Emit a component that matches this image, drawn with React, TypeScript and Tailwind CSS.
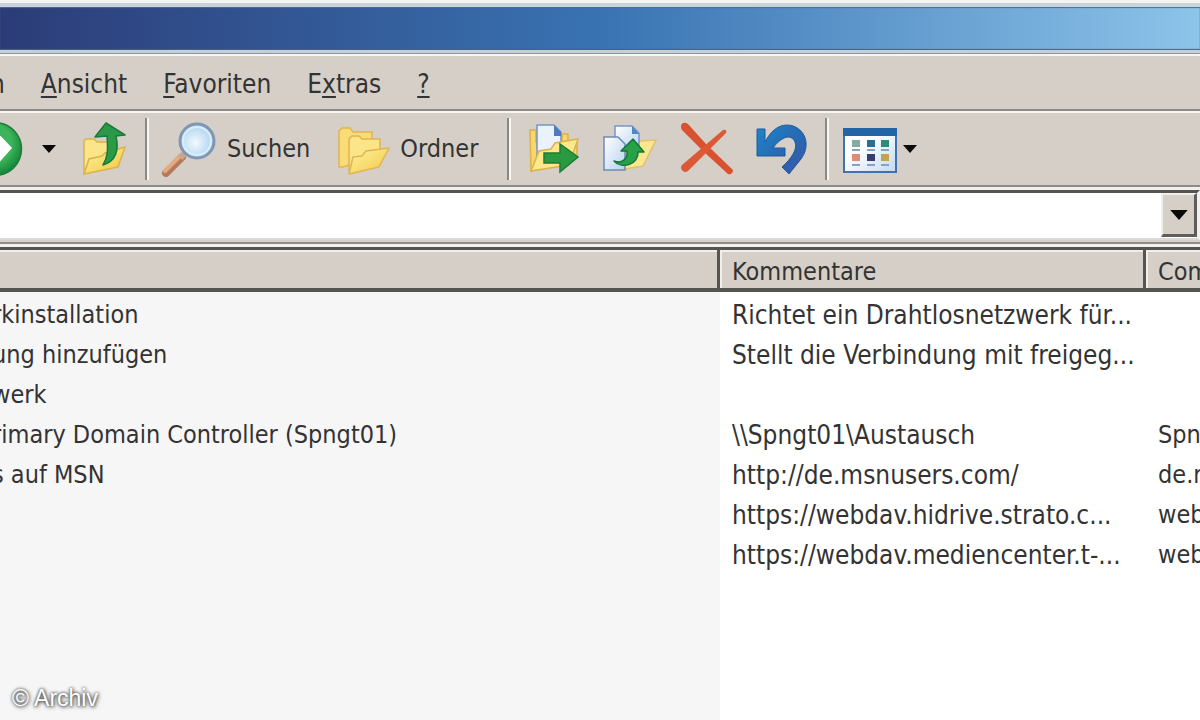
import type { ReactNode } from "react";

type Row = { name: string; comment: string; computer: string };

const rows: Row[] = [
  { name: "rkinstallation", comment: "Richtet ein Drahtlosnetzwerk für...", computer: "" },
  { name: "ung hinzufügen", comment: "Stellt die Verbindung mit freigeg...", computer: "" },
  { name: "werk", comment: "", computer: "" },
  { name: "rimary Domain Controller (Spngt01)", comment: "\\\\Spngt01\\Austausch", computer: "Spn" },
  { name: "s auf MSN", comment: "http://de.msnusers.com/", computer: "de.m" },
  { name: "", comment: "https://webdav.hidrive.strato.c...", computer: "web" },
  { name: "", comment: "https://webdav.mediencenter.t-...", computer: "web" },
];

function Caret({ className = "h-2 w-3.5" }: { className?: string }) {
  return (
    <svg viewBox="0 0 14 8" className={className}>
      <path d="M0 0h14L7 8z" fill="#0a0a0a" />
    </svg>
  );
}

function Separator() {
  return <div className="h-[62px] w-1 shrink-0 border-l-2 border-r-2 border-l-[#8b8783] border-r-[#f8f7f4]" />;
}

function ForwardIcon() {
  return (
    <svg viewBox="0 0 24 56" className="h-14 w-6">
      <defs>
        <radialGradient id="go" cx="0.45" cy="0.4" r="0.6">
          <stop offset="0.6" stopColor="#3cb55a" />
          <stop offset="1" stopColor="#15853a" />
        </radialGradient>
      </defs>
      <circle cx="-5" cy="28" r="26.5" fill="url(#go)" stroke="#1c7c3a" strokeWidth="1.5" />
      <path d="M-4 10 12 27-4 45z" fill="#fff" />
    </svg>
  );
}

function UpFolderIcon() {
  return (
    <svg viewBox="0 0 46 56" className="h-14 w-[46px]">
      <defs>
        <linearGradient id="upf" x1="0" y1="0" x2="1" y2="1">
          <stop offset="0" stopColor="#fff3a2" />
          <stop offset="1" stopColor="#f0c63e" />
        </linearGradient>
      </defs>
      <path d="M2 20l2-2h8l3 3h17v14L2 53z" fill="#fbe58a" stroke="#dcb24a" strokeWidth="1.5" />
      <path d="M2 53l5-15 13-3 3-3 20-6-7 20z" fill="url(#upf)" stroke="#dcb24a" strokeWidth="1.5" />
      <path d="M13 16L24 2l19 12-9 1c3 14 1 25-13 29 5-8 5-16 4-29z" fill="#2a9a48" stroke="#187a3a" strokeWidth="1.5" strokeLinejoin="round" />
    </svg>
  );
}

function SearchIcon() {
  return (
    <svg viewBox="0 0 56 56" className="size-14">
      <defs>
        <radialGradient id="lens" cx="0.45" cy="0.55" r="0.6">
          <stop offset="0" stopColor="#f2faff" />
          <stop offset="1" stopColor="#a5cdec" />
        </radialGradient>
      </defs>
      <path d="M5 52L21 36" stroke="#b47a5c" strokeWidth="8" strokeLinecap="round" />
      <path d="M4 50L20 34" stroke="#e3ab80" strokeWidth="4" strokeLinecap="round" />
      <path d="M19 37l5-5" stroke="#c9a78c" strokeWidth="6" />
      <circle cx="36" cy="20" r="17" fill="url(#lens)" stroke="#8097b4" strokeWidth="3" />
      <circle cx="36" cy="20" r="14" fill="none" stroke="#d9eefb" strokeWidth="2" />
    </svg>
  );
}

function FoldersIcon() {
  return (
    <svg viewBox="0 0 54 56" className="h-14 w-[54px]">
      <defs>
        <linearGradient id="fold" x1="0" y1="0" x2="1" y2="1">
          <stop offset="0" stopColor="#fff2a0" />
          <stop offset="1" stopColor="#f2c947" />
        </linearGradient>
      </defs>
      <path d="M3 10l3-3h8l3 4h19v25L7 46H3z" fill="#f9dc78" stroke="#e0b452" strokeWidth="1.5" />
      <path d="M13 18l3-3h7l3 3h18v17L15 52l-2-2z" fill="#fbe588" stroke="#e0b452" strokeWidth="1.5" />
      <path d="M13 53l4-17 9-1 4-5 23-3-10 19z" fill="url(#fold)" stroke="#e0b452" strokeWidth="1.5" strokeLinejoin="round" />
    </svg>
  );
}

function MoveToIcon() {
  return (
    <svg viewBox="0 0 56 56" className="size-14">
      <path d="M3 9h6v12h26v-8h6v8h9v15L4 50z" fill="#f6d767" stroke="#dcb24a" strokeWidth="1.5" />
      <path d="M10 4h17l7 7v24H10z" fill="#eaf3fd" stroke="#7695c7" strokeWidth="1.5" />
      <path d="M27 4l7 7v4h-7z" fill="#4f79bd" />
      <path d="M4 50l8-20 12-2 4-6 23-4-9 26z" fill="#fde98c" stroke="#dcb24a" strokeWidth="1.5" />
      <path d="M17 32h16v-9l18 13-18 15v-9H17z" fill="#2a9a40" stroke="#1c7c36" strokeWidth="1.5" />
    </svg>
  );
}

function CopyToIcon() {
  return (
    <svg viewBox="0 0 56 56" className="size-14">
      <defs>
        <linearGradient id="page" x1="0" y1="0" x2="1" y2="1">
          <stop offset="0" stopColor="#fff" />
          <stop offset="1" stopColor="#b6d2ef" />
        </linearGradient>
      </defs>
      <path d="M16 49l10-25 8-1 3-3 16-1-13 26z" fill="#fbe88e" stroke="#e0c26a" strokeWidth="1.5" />
      <path d="M12 5h17l7 7v18H12z" fill="url(#page)" stroke="#7695c7" strokeWidth="1.5" />
      <path d="M29 5l7 8h-7z" fill="#4f86c4" />
      <path d="M1 16h14l7 7v26H1z" fill="url(#page)" stroke="#6d8bb9" strokeWidth="1.5" />
      <path d="M11 40c8 3 14-2 13-10h-6l12-12 11 13h-6c1 12-16 18-24 9z" fill="#27a148" stroke="#157539" strokeWidth="1.5" strokeLinejoin="round" />
    </svg>
  );
}

function DeleteIcon() {
  return (
    <svg viewBox="0 0 56 56" className="size-14">
      <path d="M2 6c0-5 4-5 7-3l18 20 27 26c0 3-2 5-5 4L25 31 5 11C3 9 2 8 2 6z" fill="#d95230" />
      <path d="M3 44L44 9c3-1 4 1 3 3L20 39 9 50c-4 3-9-2-6-6z" fill="#dd5836" />
    </svg>
  );
}

function UndoIcon() {
  return (
    <svg viewBox="0 0 56 56" className="size-14">
      <defs>
        <linearGradient id="undo" x1="0" y1="0" x2="1" y2="1">
          <stop offset="0" stopColor="#1f86c9" />
          <stop offset="0.6" stopColor="#2866b0" />
          <stop offset="1" stopColor="#4454a8" />
        </linearGradient>
      </defs>
      <path
        d="M2 8h8v13C18 6 28 2 38 5c14 5 17 21 8 33L34 53l-7-7c9-8 16-18 13-25-4-9-14-5-22 6h12v8H2z"
        fill="url(#undo)"
        stroke="#20599c"
        strokeLinejoin="round"
      />
    </svg>
  );
}

function ViewsIcon() {
  return (
    <svg viewBox="0 0 58 56" className="h-14 w-[58px]">
      <defs>
        <linearGradient id="views" x1="0" y1="0" x2="1" y2="1">
          <stop offset="0.4" stopColor="#fbfdff" />
          <stop offset="1" stopColor="#c0daf3" />
        </linearGradient>
      </defs>
      <rect x="3" y="8" width="52" height="43" fill="url(#views)" stroke="#4270b2" strokeWidth="2" />
      <path d="M2 7h54v8H2z" fill="#2264a5" />
      <path d="M11 19h8v7h-8z" fill="#84aaa3" />
      <path d="M26 19h8v7h-8z" fill="#296e96" />
      <path d="M40 19h8v7h-8z" fill="#2b8d78" />
      <path d="M11 33h8v7h-8z" fill="#dd8c78" />
      <path d="M26 33h8v7h-8z" fill="#3b3c6b" />
      <path d="M40 33h8v7h-8z" fill="#c4a447" />
      <path d="M11 29h8M26 29h8M40 29h8M11 44h8M26 44h8M40 44h8" stroke="#8e9fc2" strokeWidth="2" />
    </svg>
  );
}

function ToolButton({ label, children }: { label: string; children: ReactNode }) {
  return (
    <button aria-label={label} className="flex shrink-0 items-center">
      {children}
    </button>
  );
}

function Accel({ children }: { children: ReactNode }) {
  return <u className="decoration-2 underline-offset-[3px]">{children}</u>;
}

export default function App() {
  return (
    <div className="flex min-h-screen flex-col overflow-hidden bg-[#d6cfc8] font-['DejaVu_Sans_Condensed','DejaVu_Sans',sans-serif] text-[25px] leading-8 text-[#333] whitespace-nowrap">
      {/* Title bar */}
      <div className="h-[7px] border-t-[3px] border-[#f4f4f1] bg-[#c9d3da]" />
      <div className="h-[43px] bg-linear-to-r from-[#2b3c78] via-[#3973b2] via-50% to-[#8dc4ea] shadow-[inset_0_1px_1px_#5a6b7d,inset_0_-1px_1px_#4d6078]" />
      <div className="h-1 border-b border-[#8b959c] bg-[#c3d0dc]" />

      {/* Menu */}
      <nav className="flex h-[57px] items-center gap-9 overflow-hidden border-t-2 border-b-2 border-t-[#f7f6f3] border-b-[#8d8a87] pt-0.5 text-[26px]">
        <button className="-ml-2.5">n</button>
        <button><Accel>A</Accel>nsicht</button>
        <button><Accel>F</Accel>avoriten</button>
        <button>E<Accel>x</Accel>tras</button>
        <button><Accel>?</Accel></button>
      </nav>

      {/* Toolbar */}
      <div className="flex h-[76px] items-center overflow-hidden border-t-2 border-b-2 border-t-[#f7f6f3] border-b-[#8d8a87]">
        <div className="flex w-[145px] shrink-0 items-center">
          <ToolButton label="Vorwärts"><ForwardIcon /></ToolButton>
          <div className="flex w-[58px] justify-center pr-2">
            <ToolButton label="Verlauf"><Caret /></ToolButton>
          </div>
          <ToolButton label="Aufwärts"><UpFolderIcon /></ToolButton>
        </div>
        <Separator />
        <div className="flex w-[358px] shrink-0 items-center gap-[26px] pl-3">
          <button className="flex items-center gap-2.5"><SearchIcon />Suchen</button>
          <button className="flex items-center gap-2.5"><FoldersIcon />Ordner</button>
        </div>
        <Separator />
        <div className="flex w-[314px] shrink-0 items-center gap-5 pl-4">
          <ToolButton label="Verschieben nach"><MoveToIcon /></ToolButton>
          <ToolButton label="Kopieren nach"><CopyToIcon /></ToolButton>
          <ToolButton label="Löschen"><DeleteIcon /></ToolButton>
          <ToolButton label="Rückgängig"><UndoIcon /></ToolButton>
        </div>
        <Separator />
        <button aria-label="Ansichten" className="flex items-center gap-1 pl-3">
          <ViewsIcon />
          <Caret />
        </button>
      </div>

      {/* Address bar */}
      <div className="border-t-[3px] border-b-2 border-t-[#f1f0ed] border-b-[#8d8a87] pb-0.5">
        <div className="flex h-[50px] border-t-[3px] border-r-[3px] border-b-2 border-t-[#545452] border-r-[#f1f0ed] border-b-[#dcdad5] bg-white">
          <input aria-label="Adresse" className="min-w-0 flex-1 bg-white px-2 outline-none" />
          <button
            aria-label="Adressliste"
            className="flex h-11 w-9 items-center justify-center border-t-2 border-r-[3px] border-b-[3px] border-l-2 border-t-[#f1efec] border-r-[#5f5d5b] border-b-[#5f5d5b] border-l-[#f1efec] bg-[#d6cfc8]"
          >
            <Caret className="h-2.5 w-[18px]" />
          </button>
        </div>
      </div>

      {/* File list */}
      <div className="flex flex-1 flex-col border-t-[3px] border-[#f1f0ed] bg-white">
        <div className="relative flex-1 bg-linear-to-r from-[#f6f6f6] from-60% to-white to-60%">
          <table className="w-full table-fixed border-separate border-spacing-0 text-left">
            <colgroup>
              <col className="w-[60%]" />
              <col />
              <col className="w-[54px]" />
            </colgroup>
            <thead className="bg-[#d6cfc8]">
              <tr className="h-11">
                <th aria-label="Name" className="border-t-[3px] border-r-[3px] border-b-4 border-[#545452] p-0 shadow-[inset_0_2px_0_#f1efec]" />
                <th className="border-t-[3px] border-r-[3px] border-b-4 border-[#545452] p-0 pt-1.5 pl-3 font-normal shadow-[inset_2px_2px_0_#f1efec]">
                  Kommentare
                </th>
                <th className="overflow-hidden border-t-[3px] border-b-4 border-[#545452] p-0 pt-1.5 pl-3 font-normal shadow-[inset_2px_2px_0_#f1efec]">
                  Com
                </th>
              </tr>
            </thead>
            <tbody>
              {rows.map((row, i) => (
                <tr key={i} className="h-10">
                  <td className="overflow-hidden p-0 pt-1.5">
                    <span className="-ml-2">{row.name}</span>
                  </td>
                  <td className="overflow-hidden p-0 pt-1.5 pl-3 text-[26px]">{row.comment}</td>
                  <td className="overflow-hidden p-0 pt-1.5 pl-3">{row.computer}</td>
                </tr>
              ))}
            </tbody>
          </table>
          <p className="absolute bottom-1.5 left-3 font-['Liberation_Sans',sans-serif] text-[23px] text-white [text-shadow:0_0_3px_#333,1px_1px_4px_#444]">
            © Archiv
          </p>
        </div>
      </div>
    </div>
  );
}
